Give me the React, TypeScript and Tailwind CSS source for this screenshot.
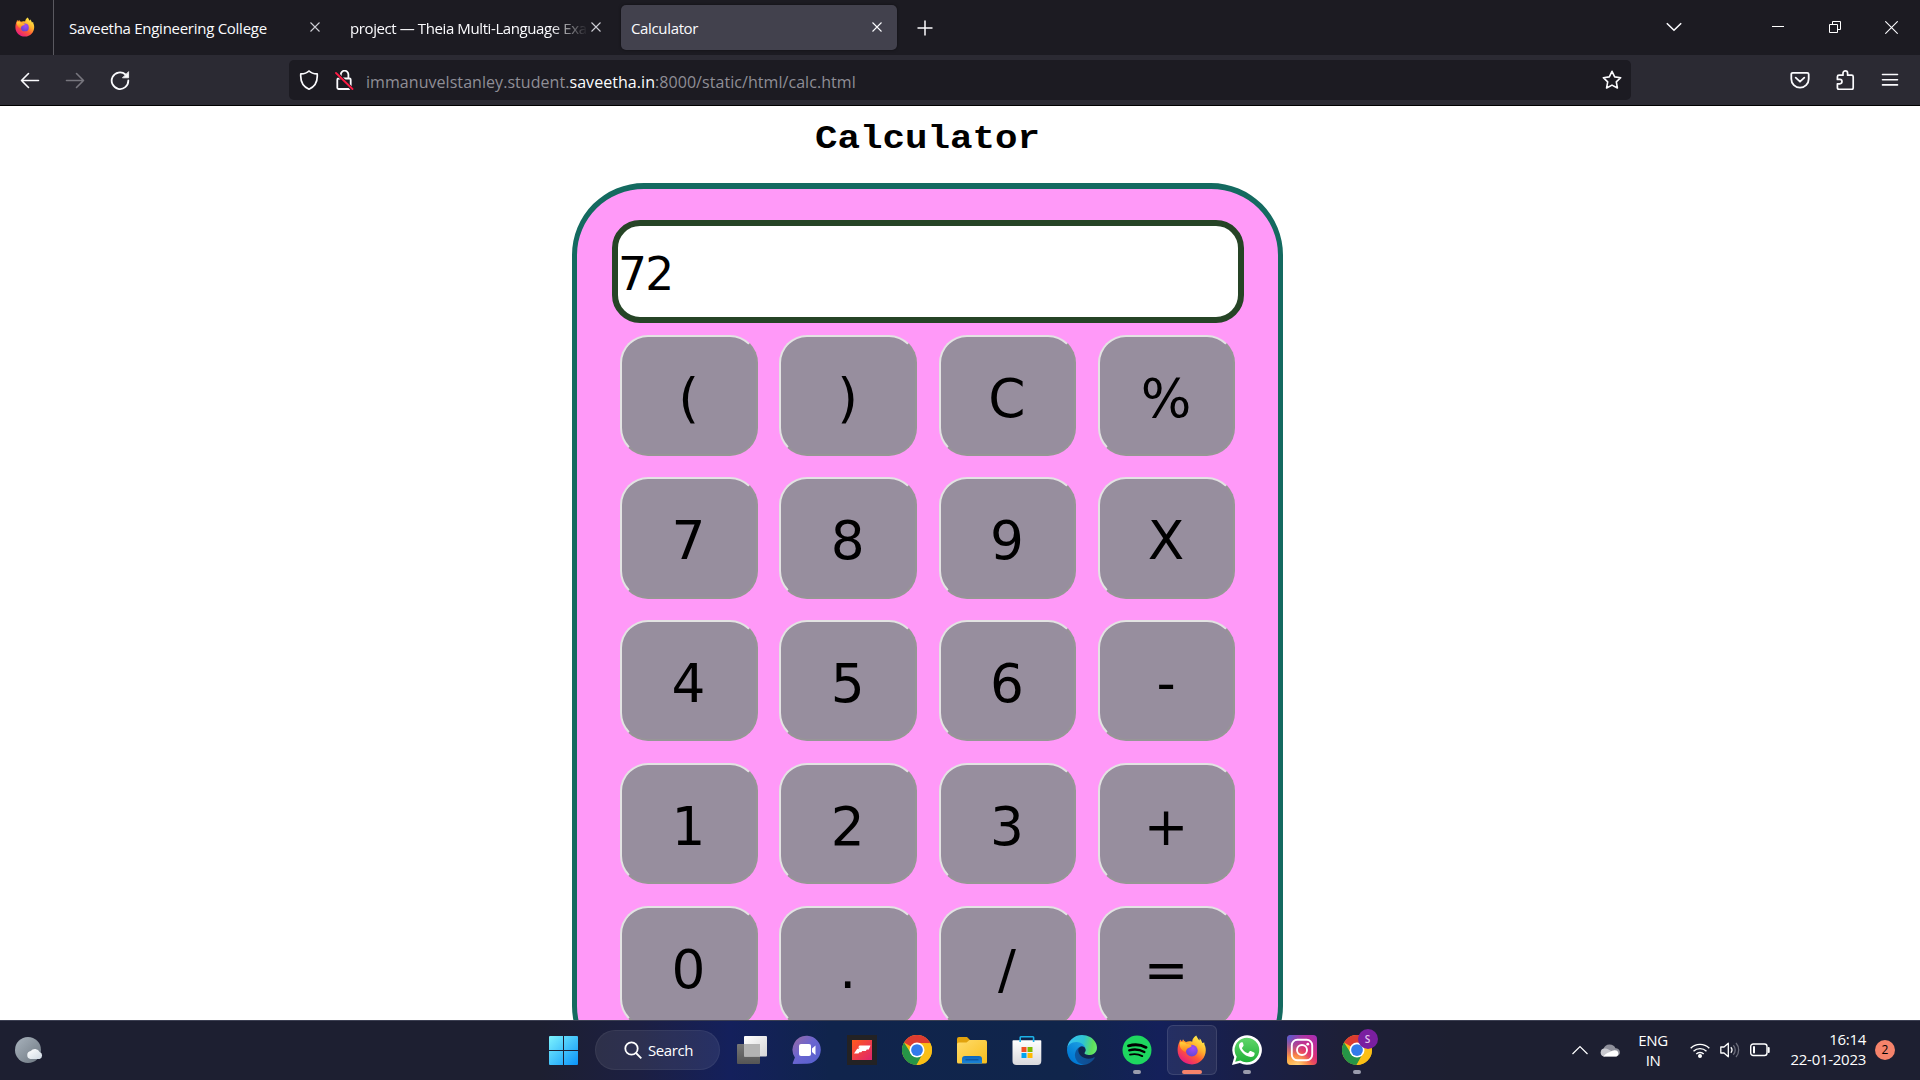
import React from "react";

type P = { className?: string; children?: React.ReactNode };

const Line = ({ className = "", children }: P) => (
  <svg viewBox="0 0 20 20" className={"block h-5 w-5 shrink-0 " + className} fill="none" stroke="currentColor" strokeWidth="1.6" strokeLinecap="round" strokeLinejoin="round">
    {children}
  </svg>
);

const TabClose = ({ className = "" }: P) => (
  <svg viewBox="0 0 10 10" className={"h-2.5 w-2.5 shrink-0 " + className} fill="none" stroke="currentColor" strokeWidth="1.1">
    <path d="M.5.5l9 9M9.5.5l-9 9" />
  </svg>
);

const Firefox = ({ className = "", id }: P & { id: string }) => (
  <svg viewBox="0 0 30 30" className={"block shrink-0 " + className}>
    <defs>
      <linearGradient id={id + "a"} x1="0.85" y1="0.05" x2="0.2" y2="1">
        <stop offset="0" stopColor="#fff44f" />
        <stop offset=".35" stopColor="#ffb12c" />
        <stop offset=".6" stopColor="#ff5a35" />
        <stop offset="1" stopColor="#e3118c" />
      </linearGradient>
      <linearGradient id={id + "c"} x1="0" y1="0" x2="0" y2="1">
        <stop offset="0" stopColor="#ffd43a" />
        <stop offset="1" stopColor="#ff7a1f" />
      </linearGradient>
      <radialGradient id={id + "b"} cx=".6" cy=".3" r=".8">
        <stop offset="0" stopColor="#a24cf5" />
        <stop offset="1" stopColor="#5a45cf" />
      </radialGradient>
    </defs>
    <path fill={"url(#" + id + "a)"} d="M19.2.6c1 1.700 1.600 3.300 3.300 5 .2-1 .1-1.700 0-2.300 1.500 1.200 2.300 2.900 2.800 4.800l2-.6c0 1.500.2 2.300.9 3.800 2.600 8.800-3.700 18.100-13.200 18.100C6.700 29.400.6 23.200.6 15.300c0-3.300.6-6.200 1.800-8.300l.7-2.500 1.900 2 1-2.300c.8 1.300 1.800 2.300 3 2.900 2-.9 4.300-1 6.200-.3C15.300 4.200 16.800 2 19.200.6z" />
    <circle cx="14.800" cy="15.600" r="5.900" fill={"url(#" + id + "b)"} />
    <path fill={"url(#" + id + "c)"} d="M2.700 7.400C5.300 6.500 8 7.100 9.800 9.300c1.800-.2 3.600.4 4.900 1.400-.6 1.600-2.300 1.700-3.800 2.500-1.600.9-1.400 2.300-2.400 3.800C5.200 15.500 2 12.500 2.700 7.400z" />
  </svg>
);

const Chrome = () => (
  <svg viewBox="0 0 48 48" className="block h-[30px] w-[30px]">
    <circle cx="24" cy="24" r="24" fill="#fbbf16" />
    <path fill="#dd3b30" d="M24 24 3.200 12A24 24 0 0 1 44.800 12L45 13H24z" />
    <path fill="#269547" d="M24 24l9.500 5.500L24 48A24 24 0 0 1 3.200 12L14.500 29.500z" />
    <path fill="#fbbf16" d="M33.500 29.500 23 48A24 24 0 0 0 45.300 13H24z" />
    <circle cx="24" cy="24" r="12" fill="#fff" />
    <circle cx="24" cy="24" r="9.400" fill="#327bea" />
  </svg>
);

const Start = () => (
  <svg viewBox="0 0 29 29" className="block h-[29px] w-[29px]">
    <defs>
      <linearGradient id="st" x1="0" y1="0" x2="29" y2="29" gradientUnits="userSpaceOnUse">
        <stop offset="0" stopColor="#7df3fd" />
        <stop offset="1" stopColor="#0a93fa" />
      </linearGradient>
    </defs>
    <path fill="url(#st)" d="M0 1q0-1 1-1h13v14H0zM15 0h13q1 0 1 1v13H15zM0 15h14v14H1q-1 0-1-1zM15 15h14v13q0 1-1 1H15z" />
  </svg>
);

const TaskView = () => (
  <svg viewBox="0 0 30 30" className="block h-[30px] w-[30px]">
    <defs>
      <linearGradient id="tw" x1="0" y1="0" x2="1" y2="1"><stop stopColor="#fff" /><stop offset="1" stopColor="#d5d5d6" /></linearGradient>
      <linearGradient id="tg" x1="0" y1="0" x2="0" y2="1"><stop stopColor="#777" /><stop offset="1" stopColor="#555" /></linearGradient>
    </defs>
    <rect x="0" y="9" width="23" height="20" rx="1" fill="url(#tg)" />
    <rect x="7" y="1" width="23" height="20.500" rx="1" fill="url(#tw)" />
    <path d="M7 9h16v12.500H7z" fill="#b3b3b3" />
  </svg>
);

const Chat = () => (
  <svg viewBox="0 0 30 30" className="block h-[30px] w-[30px]">
    <defs>
      <linearGradient id="ch" x1="0" y1="0" x2="1" y2="1"><stop stopColor="#9a6a9f" /><stop offset=".45" stopColor="#6b65d0" /><stop offset="1" stopColor="#5360cf" /></linearGradient>
    </defs>
    <path fill="url(#ch)" d="M15.500.8A14 14 0 1 1 14 28.800L1.500 29c-1 0-1-.8-.6-1.500l2-5A14 14 0 0 1 15.500.8z" />
    <rect x="7" y="9" width="12" height="12" rx="2" fill="#fff" />
    <path d="M20 13.500l3.500-3v9.500L20 17z" fill="#fff" />
  </svg>
);

const RedApp = () => (
  <svg viewBox="0 0 30 30" className="block h-[30px] w-[30px]">
    <defs>
      <linearGradient id="ra" x1="0" y1="0" x2="1" y2="1"><stop stopColor="#ff5a1c" /><stop offset="1" stopColor="#e0246f" /></linearGradient>
    </defs>
    <path d="M0 0h30v30H0z" fill="#232224" />
    <path d="M5 5h20v20H5z" fill="url(#ra)" />
    <path d="M23.500 10.500H12.500l-1.500 2h1.500l-.8 1.200h-1.500L7 18.500h4.500l.8-1.200h2l1-1.400h3.500l1-1.500h2z" fill="#fff" />
  </svg>
);

const Folder = () => (
  <svg viewBox="0 0 30 30" className="block h-[30px] w-[30px]">
    <defs>
      <linearGradient id="fo" x1="0" y1="0" x2="1" y2="1"><stop stopColor="#ffdb6b" /><stop offset="1" stopColor="#f8be1c" /></linearGradient>
      <linearGradient id="fb" x1="0" y1="0" x2="0" y2="1"><stop stopColor="#0c66bd" /><stop offset="1" stopColor="#1c86d8" /></linearGradient>
    </defs>
    <path d="M0 4q0-2 2-2h8l3 3v8H0z" fill="#e2a20d" />
    <path d="M0 9q0-1.500 2-1.500h7.500L12.500 5H28q2 0 2 2v20q0 1.500-1.500 1.500h-27Q0 28.500 0 27z" fill="url(#fo)" />
    <path d="M5 28.500V24q0-3 3-3h14q3 0 3 3v4.500z" fill="url(#fb)" />
    <path d="M8.500 24.800h13" stroke="#0a4b95" strokeWidth="1" />
  </svg>
);

const Store = () => (
  <svg viewBox="0 0 30 30" className="block h-[30px] w-[30px]">
    <defs>
      <linearGradient id="sr" x1="0" y1="0" x2="0" y2="1"><stop stopColor="#fff" /><stop offset="1" stopColor="#d9d9dc" /></linearGradient>
    </defs>
    <path d="M.5 6q0-.8.8-.8h27.200q.8 0 .8.800v20q0 4-4 4H4.500q-4 0-4-4z" fill="url(#sr)" />
    <path d="M8.200 7V2.500q0-.7.7-.7h12q.7 0 .7.700V7" fill="none" stroke="#1cb2e8" strokeWidth="1.600" />
    <path d="M9.500 12h5v5h-5z" fill="#f25022" />
    <path d="M15.500 12h5v5h-5z" fill="#7fba00" />
    <path d="M9.500 18h5v5h-5z" fill="#00a4ef" />
    <path d="M15.500 18h5v5h-5z" fill="#ffb900" />
  </svg>
);

const Edge = () => (
  <svg viewBox="0 0 256 256" className="block h-[30px] w-[30px]">
    <defs>
      <linearGradient id="e1" x1="60" y1="177" x2="241" y2="177" gradientUnits="userSpaceOnUse"><stop stopColor="#0c59a4" /><stop offset="1" stopColor="#114a8b" /></linearGradient>
      <linearGradient id="e2" x1="150" y1="90" x2="40" y2="225" gradientUnits="userSpaceOnUse"><stop stopColor="#1b9de2" /><stop offset=".2" stopColor="#1595df" /><stop offset=".7" stopColor="#0680d7" /><stop offset="1" stopColor="#0078d4" /></linearGradient>
      <linearGradient id="e3" x1="20" y1="60" x2="250" y2="110" gradientUnits="userSpaceOnUse"><stop stopColor="#35c1f1" /><stop offset=".5" stopColor="#2fc5d0" /><stop offset=".85" stopColor="#5fe05a" /><stop offset="1" stopColor="#66eb6e" /></linearGradient>
    </defs>
    <path fill="url(#e1)" d="M231 190.500c-3.400 1.800-6.900 3.400-10.500 4.700a101.700 101.700 0 0 1-35.900 6.500c-47.300 0-88.500-32.500-88.500-74.300a31.500 31.500 0 0 1 16.400-27.300c-42.800 1.800-53.800 46.400-53.800 72.500 0 73.900 68.100 81.400 82.800 81.400 7.900 0 19.800-2.300 27-4.600l1.300-.4a128.300 128.300 0 0 0 66.600-52.800 4 4 0 0 0-5.400-5.700z" />
    <path fill="url(#e2)" d="M105.700 241.400a79.200 79.200 0 0 1-22.700-21.300 80.700 80.700 0 0 1 29.500-120c3.200-1.500 8.500-4.100 15.600-4a32.400 32.400 0 0 1 25.700 13 31.900 31.900 0 0 1 6.300 18.700c0-.2 24.500-79.600-80-79.600-43.900 0-80 41.700-80 78.200a130.200 130.200 0 0 0 12.100 56 128 128 0 0 0 156.400 67 75.500 75.500 0 0 1-62.800-8z" />
    <path fill="url(#e3)" d="M152.300 148.900c-.9 1-3.400 2.500-3.400 5.600 0 2.600 1.700 5.200 4.800 7.300 14.300 10 41.400 8.600 41.500 8.600a59.600 59.600 0 0 0 30.300-8.300 61.400 61.400 0 0 0 30.400-52.900c.3-22.400-8-37.300-11.300-43.900C223.500 23.900 177.700 0 128 0A128 128 0 0 0 0 126.200c.5-36.500 36.800-66 80-66 3.500 0 23.500.3 42 10 16.300 8.600 24.900 18.900 30.800 29.200 6.200 10.700 7.300 24.100 7.300 29.500 0 5.300-2.700 13.300-7.800 20z" />
  </svg>
);

const Spotify = () => (
  <svg viewBox="0 0 30 30" className="block h-[30px] w-[30px]" fill="none" stroke="#000" strokeLinecap="round">
    <circle cx="15" cy="15" r="14.500" fill="#1ed760" stroke="none" />
    <path d="M6.500 10.800c6-1.700 12.500-1.200 17.600 1.600" strokeWidth="2.800" />
    <path d="M7.200 15.300c5.200-1.400 10.700-.8 15.200 1.700" strokeWidth="2.300" />
    <path d="M8 19.600c4.500-1 8.700-.5 12.300 1.500" strokeWidth="1.900" />
  </svg>
);

const WhatsApp = () => (
  <svg viewBox="0 0 30 30" className="block h-[30px] w-[30px]">
    <defs>
      <linearGradient id="wa" x1="0" y1="0" x2="0" y2="1"><stop stopColor="#60d66a" /><stop offset="1" stopColor="#20b038" /></linearGradient>
    </defs>
    <path fill="#fff" d="M0 30l2.200-7.700A14.800 14.800 0 1 1 7.800 27.900z" />
    <path fill="url(#wa)" d="M3.200 26.800l1.500-5A12.300 12.300 0 1 1 8.400 25.400z" />
    <path fill="#fff" d="M11 8c-.4-.8-.8-.8-1.300-.8-1.200 0-2.700 1.400-2.700 3.600 0 2.200 1.500 4.300 1.800 4.700 1.700 2.500 4 4.800 7.800 6.100 3.500 1.200 5.800-.5 6-2.700.1-.8 0-1-.5-1.300l-3.300-1.600c-.5-.2-.8-.1-1.100.3l-1.400 1.700c-.3.300-.6.300-1 .1-2.400-1-4-2.500-5.200-4.700-.2-.4-.1-.7.200-1l1.100-1.400c.2-.3.200-.6.100-.9z" />
  </svg>
);

const Instagram = () => (
  <svg viewBox="0 0 30 30" className="block h-[30px] w-[30px]">
    <defs>
      <linearGradient id="i1" x1="0" y1="1" x2=".9" y2="0"><stop stopColor="#ffc04a" /><stop offset=".3" stopColor="#fb7a3d" /><stop offset=".6" stopColor="#dc2f76" /><stop offset="1" stopColor="#a52fb5" /></linearGradient>
      <radialGradient id="i2" cx="0" cy="0" r=".75"><stop stopColor="#4163db" /><stop offset="1" stopColor="#7a3fce" stopOpacity="0" /></radialGradient>
      <radialGradient id="i3" cx=".35" cy="1.050" r=".5"><stop stopColor="#ffe08a" /><stop offset="1" stopColor="#ffb04a" stopOpacity="0" /></radialGradient>
    </defs>
    <rect width="30" height="30" rx="4" fill="url(#i1)" />
    <rect width="30" height="30" rx="4" fill="url(#i2)" />
    <rect width="30" height="30" rx="4" fill="url(#i3)" />
    <rect x="4.800" y="4.800" width="20.400" height="20.400" rx="5.500" fill="none" stroke="#fff" strokeWidth="1.900" />
    <circle cx="15" cy="15" r="5" fill="none" stroke="#fff" strokeWidth="1.900" />
    <circle cx="20.800" cy="9.200" r="1.400" fill="#fff" />
  </svg>
);

const Slot = ({ children, mark, active }: { children: React.ReactNode; mark?: boolean; active?: boolean }) => (
  <div className="flex w-[55px] justify-center">
    <div className={"relative flex h-[50px] w-[50px] items-center justify-center " + (active ? "rounded-md border border-white/10 bg-white/[0.07]" : "")}>
      {children}
      {mark && <span className="absolute bottom-[1px] left-[21px] h-1 w-2 rounded-full bg-[#9a9cad]" />}
      {active && <span className="absolute bottom-0 left-[14px] h-1 w-5 rounded-full bg-[#f5836b]" />}
    </div>
  </div>
);

const keys = ["(", ")", "C", "%", "7", "8", "9", "X", "4", "5", "6", "-", "1", "2", "3", "+", "0", ".", "/", "="];

export default function App() {
  return (
    <div className="flex h-[1080px] w-[1920px] flex-col overflow-hidden bg-white font-['Open_Sans','Noto_Sans',sans-serif]">
      <div className="flex h-[55px] shrink-0 bg-[#1c1b22] text-[15px] text-[#fbfbfe]">
        <div className="flex w-[54px] items-center border-r border-[#5a5960] pl-[15px]">
          <Firefox id="fa" className="mb-px h-5 w-5" />
        </div>
        <div className="flex w-[276px] items-center pl-[15px] pt-px">
          <span className="w-[241px] whitespace-nowrap tracking-[-0.27px]">Saveetha Engineering College</span>
          <TabClose className="mb-0.5 text-[#cfcfd6]" />
        </div>
        <div className="flex w-[291px] items-center pl-5 pt-px">
          <span className="w-[241px] whitespace-nowrap tracking-[-0.4px] [mask-image:linear-gradient(to_right,#000_200px,transparent_238px)]">project — Theia Multi-Language Exa</span>
          <TabClose className="mb-0.5 text-[#cfcfd6]" />
        </div>
        <div className="mt-[5px] flex h-[45px] w-[276px] items-center justify-between rounded-[5px] bg-[#42414d] pl-[10px] pr-[15px] shadow-[0_0_3px_rgba(0,0,0,0.5)]">
          <span className="pt-px tracking-[-0.35px]">Calculator</span>
          <TabClose className="mb-0.5 text-[#fbfbfe]" />
        </div>
        <div className="flex h-[55px] w-[55px] items-center justify-center">
          <svg viewBox="0 0 16 16" className="h-4 w-4" stroke="currentColor" strokeWidth="1.500"><path d="M8 .5v15M.5 8h15" /></svg>
        </div>
        <div className="ml-auto flex h-[52px] items-center">
          <svg viewBox="0 0 16 10" className="mr-[90px] mt-px h-[10px] w-4" fill="none" stroke="currentColor" strokeWidth="1.600"><path d="M.8 1.200l7.200 7 7.200-7" /></svg>
          <span className="mr-[45px] mt-px h-px w-3 bg-white" />
          <svg viewBox="0 0 12 12" className="mr-[44px] mt-0.5 h-3 w-3" fill="none" stroke="#fff"><path d="M.5 3.500h8v8h-8zM3.500 3.500v-3h8v8h-3" /></svg>
          <svg viewBox="0 0 13 13" className="mr-[22px] mt-0.5 h-[13px] w-[13px]" fill="none" stroke="currentColor" strokeWidth="1.100"><path d="M.3.300l12.400 12.400M12.700.3L.3 12.700" /></svg>
        </div>
      </div>

      <div className="flex h-[51px] shrink-0 items-center border-b border-black bg-[#2b2a33] pb-px text-[#fbfbfe]">
        <Line className="ml-5"><path d="M1.500 10.500h17M8.500 3.500l-7 7 7 7" /></Line>
        <Line className="ml-[25px] text-[#77767e]"><path d="M1.500 10.500h17M11.500 3.500l7 7-7 7" /></Line>
        <Line className="ml-[25px]"><path d="M18.300 10.500A8.300 8.300 0 1 1 15.500 4.500" strokeWidth="1.800" /><path d="M18.600 2v5.800h-5.800z" fill="currentColor" strokeWidth=".8" /></Line>
        <div className="ml-[159px] mt-px flex h-10 w-[1342px] items-center rounded-[5px] bg-[#1c1b22]">
          <Line className="ml-[10px]"><path d="M10 1C8 3 5 3.800 1.800 3.900 1.200 11 3.500 16.300 10 19.200c6.500-2.900 8.800-8.200 8.200-15.300C15 3.800 12 3 10 1z" strokeWidth="1.700" /></Line>
          <Line className="ml-[15px]">
            <path d="M6.800 8.500V4.500a3.800 3.800 0 0 1 7.600 0v4M5.500 8.500h10q1.200 0 1.200 1.200v8.100q0 1.200-1.200 1.200H4.500q-1.200 0-1.200-1.200V9.700q0-1.200 1.200-1.200z" strokeWidth="1.800" />
            <path d="M2 2.500l16.500 17" stroke="#1c1b22" strokeWidth="3.500" />
            <path d="M2 3l16.500 16" stroke="#ff1a44" strokeWidth="1.800" />
          </Line>
          <span className="ml-3 mt-[3px] whitespace-nowrap text-[16px] tracking-[0.055px] text-[#8f8e96]">
            immanuvelstanley.student.<span className="text-[#fbfbfe]">saveetha.in</span>:8000/static/html/calc.html
          </span>
          <Line className="ml-auto mr-[9px]"><path d="M10 1.300l2.700 5.600 6 .8-4.400 4.200 1.100 6.100L10 15.100 4.600 18l1.100-6.100L1.300 7.700l6-.8z" /></Line>
        </div>
        <Line className="ml-[159px]"><path d="M2.800 2.800h14.400q1.500 0 1.500 1.500V9a8.700 8.700 0 0 1-17.400 0V4.300q0-1.500 1.500-1.500zM5.700 7.700l4.300 4 4.300-4" strokeWidth="1.800" /></Line>
        <Line className="ml-[25px]"><path d="M8 5.200V3.200a2.300 2.300 0 0 1 4.600 0v2h4q1.600 0 1.600 1.600v11q0 1.600-1.600 1.600H4q-1.600 0-1.600-1.600v-4h2.400a2.200 2.200 0 0 0 0-4.400H2.400V6.800q0-1.600 1.600-1.600z" strokeWidth="1.700" /></Line>
        <Line className="ml-[25px]"><path d="M2.500 4.500h15M2.500 9.700h15M2.500 14.900h15" /></Line>
      </div>

      <div className="flex h-[914px] shrink-0 flex-col overflow-hidden pl-[572px]">
        <h1 className="h-[77px] w-[711px] shrink-0 pt-[9px] text-center font-['Courier_New','Liberation_Mono',monospace] text-[37.5px] font-bold leading-[43px] text-black">
          <span className="inline-block origin-[50%_80%] translate-y-[2px] scale-y-[0.88]">Calculator</span>
        </h1>
        <div className="h-[895px] w-[711px] shrink-0 rounded-[72px] border-[5px] border-t-[6px] border-[#146a60] bg-[#ff99f8] px-[35px] pt-[31px] font-['DejaVu_Sans',sans-serif] text-black">
          <div className="flex h-[103px] w-[632px] items-center rounded-[28px] border-[6px] border-[#264426] bg-white pt-[7px] text-[45.500px] tracking-[-1.600px]">72</div>
          <div className="ml-[8.300px] mt-[11.700px] grid grid-cols-[repeat(4,137.500px)] gap-x-[21.700px] gap-y-[21.450px]">
            {keys.map((k) => (
              <button key={k} className="h-[121.300px] rounded-[28px] border-2 border-b-[#969696] border-l-[#e3e3e3] border-r-[#969696] border-t-[#e3e3e3] bg-[#978e9e] pr-px pt-2 text-[53.300px] leading-none">{k}</button>
            ))}
          </div>
        </div>
      </div>

      <div className="flex h-[60px] shrink-0 items-center border-t border-[#3c3f52] bg-[linear-gradient(90deg,#1d1f31_0px,#1d1f31_540px,#1c1f42_640px,#14205c_730px,#10244c_830px,#10254b_1070px,#14205a_1160px,#191f48_1240px,#1d1f38_1340px,#1d1f31_1450px)] pb-px text-white">
        <svg viewBox="0 0 29 28" className="ml-[15px] h-7 w-[29px] shrink-0">
          <defs>
            <linearGradient id="wm" x1="0" y1="0" x2="1" y2="1"><stop stopColor="#a9b3bd" /><stop offset="1" stopColor="#6d7781" /></linearGradient>
            <linearGradient id="wc" x1="0" y1="0" x2="1" y2="1"><stop stopColor="#fff" /><stop offset="1" stopColor="#cfd9e3" /></linearGradient>
          </defs>
          <circle cx="13" cy="14" r="13" fill="url(#wm)" />
          <path d="M15.500 23a4 4 0 0 1 .3-7.900 5 5 0 0 1 8.800 1 3.600 3.600 0 0 1-.1 6.900z" fill="url(#wc)" />
        </svg>
        <div className="ml-[492px] mt-px flex w-[55px] pl-[13px]"><Start /></div>
        <div className="ml-[4px] flex h-10 w-[125px] items-center rounded-full border border-white/5 bg-white/[0.08] pl-7">
          <svg viewBox="0 0 18 18" className="h-[18px] w-[18px]" fill="none" stroke="#fff" strokeWidth="1.800"><circle cx="7.500" cy="7.500" r="6.200" /><path d="M12 12l5.300 5.300" /></svg>
          <span className="ml-[6px] text-[15px] tracking-[-0.400px]">Search</span>
        </div>
        <div className="ml-[4px] flex">
          <Slot><TaskView /></Slot>
          <Slot><Chat /></Slot>
          <Slot><RedApp /></Slot>
          <Slot><Chrome /></Slot>
          <Slot><Folder /></Slot>
          <Slot><Store /></Slot>
          <Slot><Edge /></Slot>
          <Slot mark><Spotify /></Slot>
          <Slot active><Firefox id="fb2" className="h-[30px] w-[30px]" /></Slot>
          <Slot mark><WhatsApp /></Slot>
          <Slot><Instagram /></Slot>
          <Slot mark>
            <Chrome />
            <span className="absolute left-[26px] top-[4px] flex h-5 w-5 items-center justify-center rounded-full bg-[#7a1fa0] text-[10px] font-semibold text-[#e3c4ee]">S</span>
          </Slot>
        </div>
        <div className="ml-auto flex items-center">
          <svg viewBox="0 0 16 10" className="h-[10px] w-4" fill="none" stroke="#fff" strokeWidth="1.200"><path d="M.5 9L8 1.500 15.500 9" /></svg>
          <svg viewBox="0 0 20 14" className="ml-3 h-[14px] w-5">
            <path d="M4 13.500a4 4 0 0 1-.5-7.800 6.500 6.500 0 0 1 12-.5 4 4 0 0 1 .5 8.300z" fill="#8f909b" />
            <path d="M4 13.500a4 4 0 0 1 .5-7.900q2-.3 4 1L13 9z" fill="#c9c9cf" />
            <path d="M3.500 13.500q2-3.500 6.500-4.500 3-2.500 6.500-1.500a3.300 3.300 0 0 1 0 6z" fill="#fff" />
          </svg>
          <div className="mb-px ml-[13px] w-10 text-center text-[15px] leading-5 tracking-[-0.400px]">ENG<br />IN</div>
          <svg viewBox="0 0 20 16" className="ml-[17px] h-4 w-5" fill="none" stroke="#fff" strokeWidth="1.400">
            <path d="M.7 6.300a13 13 0 0 1 18.600 0M3.500 9.300a9.200 9.200 0 0 1 13 0M6.300 12.100a5.200 5.200 0 0 1 7.400 0" /><circle cx="10" cy="14" r="1.300" fill="#fff" />
          </svg>
          <svg viewBox="0 0 20 16" className="ml-[10px] h-4 w-5" fill="none" stroke="#fff" strokeWidth="1.300" strokeLinejoin="round">
            <path d="M.8 5h3.200L8.300 1.200v13.600L4 11H.8z" /><path d="M10.800 5.300a4 4 0 0 1 0 5.400" /><path d="M13.300 3.200a7 7 0 0 1 0 9.600M16 1a10.500 10.500 0 0 1 0 14" stroke="#6c6d7b" />
          </svg>
          <svg viewBox="0 0 20 14" className="ml-[10px] h-[14px] w-5" fill="none" stroke="#fff" strokeWidth="1.400">
            <rect x=".7" y="1" width="16.300" height="11.500" rx="2.500" /><path d="M18.700 5v4" strokeWidth="2" strokeLinecap="round" /><path d="M4 4v5.500" strokeWidth="2" strokeLinecap="round" />
          </svg>
          <div className="mb-[3px] w-24 text-right text-[15px] leading-5 tracking-[-0.280px]">16:14<br />22-01-2023</div>
          <div className="ml-[9px] mr-[25px] flex h-5 w-5 items-center justify-center rounded-full bg-[#f5836b] text-[12px] text-black">2</div>
        </div>
      </div>
    </div>
  );
}
